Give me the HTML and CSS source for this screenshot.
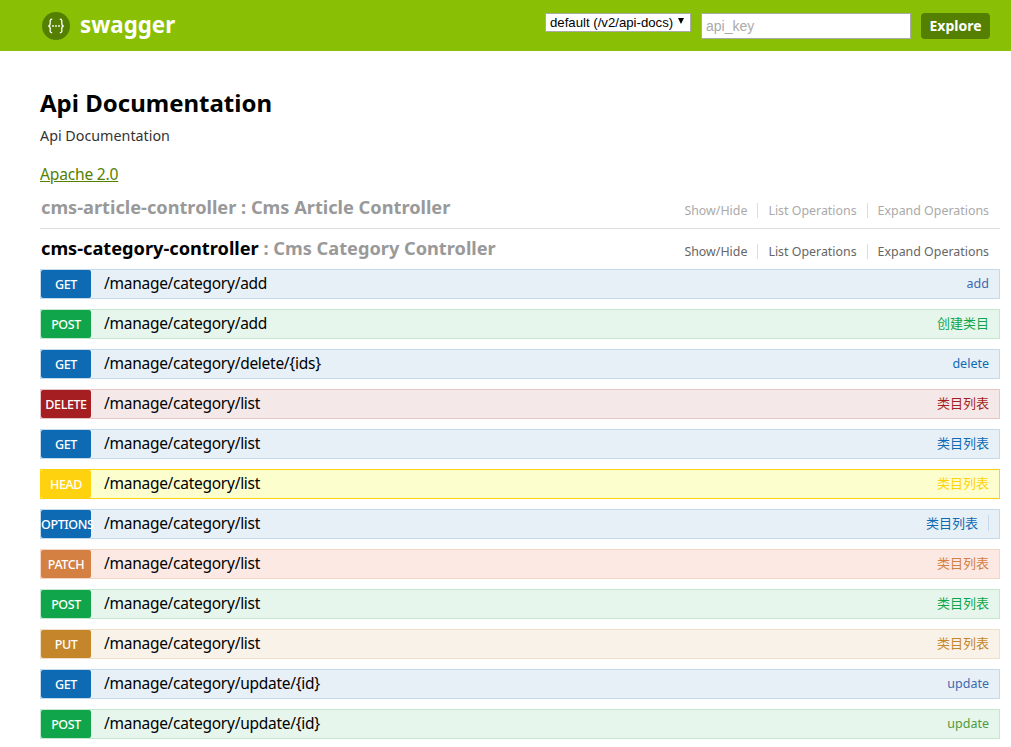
FILE: index.html
```html
<!DOCTYPE html>
<html lang="en">
<head>
<meta charset="utf-8">
<title>Swagger UI</title>
<link rel="stylesheet" href="styles.css">
</head>
<body>
<header class="header">
  <a class="logo">
    <svg class="logo-icon" width="28" height="28" viewBox="0 0 28 28" aria-hidden="true">
      <circle cx="14" cy="14" r="14" fill="#547f00"/>
      <path d="M10.2 7.2c-2.6 0-2 2.2-2 4 0 1.6-.6 2.6-1.8 2.8 1.2.2 1.8 1.200 1.800 2.800 0 1.800-.6 4 2 4M17.800 7.200c2.600 0 2 2.200 2 4 0 1.600.6 2.600 1.800 2.800-1.200.2-1.800 1.200-1.800 2.800 0 1.800.6 4-2 4" fill="none" stroke="#fff" stroke-width="1.300"/>
      <circle cx="11" cy="14" r=".9" fill="#fff"/><circle cx="14" cy="14" r=".9" fill="#fff"/><circle cx="17" cy="14" r=".9" fill="#fff"/>
    </svg>
    <span class="logo-text">swagger</span>
  </a>
  <form class="api-form">
    <label class="select-wrap">
      <select class="spec-select"><option>default (/v2/api-docs)</option></select>
    </label>
    <input class="api-key" type="text" placeholder="api_key">
    <a class="explore">Explore</a>
  </form>
</header>
<main class="content">
  <section class="info">
    <h1 class="title">Api Documentation</h1>
    <p class="desc">Api Documentation</p>
    <a class="license">Apache 2.0</a>
  </section>
  <section class="resource muted">
    <h2 class="res-title"><span>cms-article-controller</span> : Cms Article Controller</h2>
    <ul class="res-links"><li>Show/Hide</li><li>List Operations</li><li>Expand Operations</li></ul>
  </section>
  <section class="resource active">
    <h2 class="res-title"><span>cms-category-controller</span> : Cms Category Controller</h2>
    <ul class="res-links"><li>Show/Hide</li><li>List Operations</li><li>Expand Operations</li></ul>
  </section>
  <ul class="ops">
    <li class="op get"><span class="method">GET</span><span class="path">/manage/category/add</span><span class="summary sum-purple">add</span></li>
    <li class="op post"><span class="method">POST</span><span class="path">/manage/category/add</span><span class="summary cjk">创建类目</span></li>
    <li class="op get"><span class="method">GET</span><span class="path">/manage/category/delete/{ids}</span><span class="summary">delete</span></li>
    <li class="op delete"><span class="method">DELETE</span><span class="path">/manage/category/list</span><span class="summary cjk">类目列表</span></li>
    <li class="op get"><span class="method">GET</span><span class="path">/manage/category/list</span><span class="summary cjk">类目列表</span></li>
    <li class="op head"><span class="method">HEAD</span><span class="path">/manage/category/list</span><span class="summary cjk">类目列表</span></li>
    <li class="op options"><span class="method">OPTIONS</span><span class="path">/manage/category/list</span><span class="summary cjk">类目列表</span></li>
    <li class="op patch"><span class="method">PATCH</span><span class="path">/manage/category/list</span><span class="summary cjk">类目列表</span></li>
    <li class="op post"><span class="method">POST</span><span class="path">/manage/category/list</span><span class="summary cjk">类目列表</span></li>
    <li class="op put"><span class="method">PUT</span><span class="path">/manage/category/list</span><span class="summary cjk">类目列表</span></li>
    <li class="op get"><span class="method">GET</span><span class="path">/manage/category/update/{id}</span><span class="summary sum-purple">update</span></li>
    <li class="op post"><span class="method">POST</span><span class="path">/manage/category/update/{id}</span><span class="summary sum-olive">update</span></li>
  </ul>
</main>
</body>
</html>
```
FILE: styles.css
```css
* { box-sizing: border-box; }
html, body { margin: 0; padding: 0; height: 100%; overflow: hidden; }
body { background: #fff; color: #000; font-family: "Noto Sans", "Open Sans", "Noto Sans CJK SC", sans-serif; }

.header { height: 51px; background: #89bf04; display: flex; align-items: center; justify-content: space-between; padding: 0 21px 0 42px; }
.logo { display: flex; align-items: center; gap: 10px; }
.logo-icon { display: block; }
.logo-text { color: #fff; font-size: 22.300px; font-weight: 700; line-height: 28px; position: relative; top: -1px; }
.api-form { display: flex; align-items: flex-start; }
.select-wrap { display: block; position: relative; width: 146px; height: 19px; margin-right: 10px; }
.select-wrap::after { content: ""; position: absolute; right: 7px; top: 5px; border-style: solid; border-width: 6px 3.500px 0; border-color: #000 transparent transparent; pointer-events: none; }
.spec-select { display: block; appearance: none; -webkit-appearance: none; width: 146px; height: 19px; margin: 0; padding: 0 0 0 4px; font: 13.200px "Liberation Sans", Arial, sans-serif; color: #000; background: #fff; border: 1px solid #aaa; border-radius: 0; }
.api-key { width: 210px; height: 26px; margin: 0 10px 0 0; padding: 2px 4px; font: 14px "Liberation Sans", Arial, sans-serif; border: 1px solid #aaa; background: #fff; }
.api-key::placeholder { color: #aaa; opacity: 1; }
.explore { width: 69px; height: 26px; border-radius: 4px; background: #547f00; color: #fff; font-size: 14px; font-weight: 700; line-height: 26px; text-align: center; }

.content { padding: 0 11px 0 40px; }
.info { padding-top: 35px; }
.title { margin: 0; font-size: 24px; line-height: 34px; font-weight: 700; color: #000; }
.desc { margin: 6px 0 0; font-size: 14.300px; line-height: 20px; color: #333; }
.license { display: block; margin: 18px 0 0; font-size: 15.600px; letter-spacing: -.2px; line-height: 20px; color: #547f00; text-decoration: underline; }

.resource { display: flex; justify-content: space-between; align-items: flex-end; padding: 0 0 7px 1px; }
.muted { height: 45px; border-bottom: 1px solid #ddd; padding-bottom: 8px; }
.active { height: 40px; padding-bottom: 8px; }
.res-title { margin: 0; font-size: 18.200px; line-height: 26px; font-weight: 700; color: #999; }
.active .res-title span { color: #000; }
.res-links { display: flex; list-style: none; margin: 0 0 2px; padding: 0 11px 0 0; font-size: 12.400px; line-height: 15px; color: #666; }
.muted .res-links { color: #aaa; }
.res-links li { padding: 0 10px; border-right: 1px solid #ddd; }
.res-links li:last-child { padding-right: 0; border-right: 0; }

.ops { list-style: none; margin: 0; padding: 0; display: flex; flex-direction: column; gap: 10px; }
.op { display: flex; align-items: center; height: 30px; border: 1px solid; padding-right: 10px; }
.method { width: 50px; height: 28px; border-radius: 2px; color: #fff; font-size: 12.500px; font-weight: 500; letter-spacing: -.4px; line-height: 30px; text-align: center; white-space: nowrap; flex: none; }
.path { margin-left: 13px; flex: 1; font-size: 15.500px; letter-spacing: -.27px; line-height: 28px; color: #000; position: relative; top: -1px; }
.summary { font-size: 12.500px; line-height: 28px; }
.cjk { font-size: 13px; font-family: "Noto Sans CJK SC", sans-serif; position: relative; top: -1px; }

.get { background: #e7f0f7; border-color: #c3d9ec; }
.get .method { background: #0f6ab4; }
.get .summary { color: #0f6ab4; }
.post { background: #e7f6ec; border-color: #c3e8d1; }
.post .method { background: #10a54a; }
.post .summary { color: #10a54a; }
.delete { background: #f5e8e8; border-color: #e8c6c7; }
.delete .method { background: #a41e22; }
.delete .summary { color: #a41e22; }
.head { background: #fcffcd; border-color: #ffd20f; }
.head .method { background: #ffd20f; }
.head .summary { color: #ffd20f; }
.options { background: #e7f0f7; border-color: #c3d9ec; }
.options .method { background: #0f6ab4; }
.options .summary { color: #0f6ab4; padding-right: 10px; border-right: 1px solid #c3d9ec; line-height: 16px; }
.patch { background: #fce9e3; border-color: #f5d5c3; }
.patch .method { background: #d38042; }
.patch .summary { color: #d38042; }
.put { background: #f9f2e9; border-color: #f0e0ca; }
.put .method { background: #c5862b; }
.put .summary { color: #c5862b; }
.get .sum-purple { color: #3e6aaf; }
.post .sum-olive { color: #4f9a3e; }
```
